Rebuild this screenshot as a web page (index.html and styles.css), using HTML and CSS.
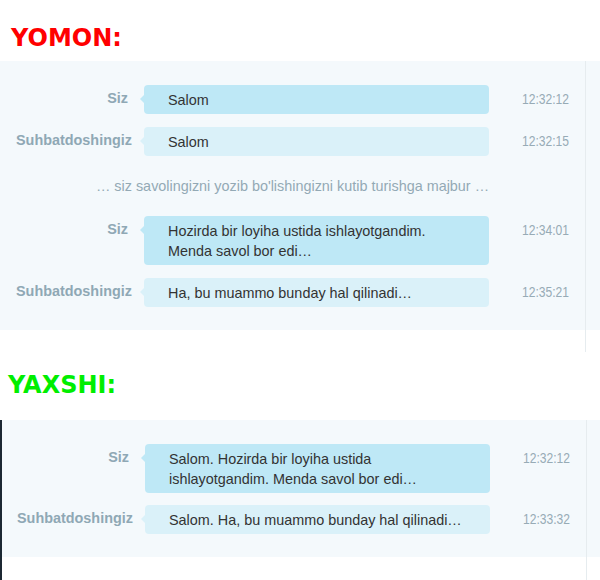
FILE: index.html
```html
<!DOCTYPE html>
<html lang="uz">
<head>
<meta charset="utf-8">
<title>Chat</title>
<link rel="stylesheet" href="styles.css">
</head>
<body>
<h1 class="label label--bad">YOMON:</h1>
<section class="thread">
  <div class="chat">
    <div class="msg msg--me">
      <div class="who">Siz</div>
      <div class="bubble">Salom</div>
      <div class="time"><span>12:32:12</span></div>
    </div>
    <div class="msg msg--them">
      <div class="who">Suhbatdoshingiz</div>
      <div class="bubble">Salom</div>
      <div class="time"><span>12:32:15</span></div>
    </div>
    <div class="note">… siz savolingizni yozib bo'lishingizni kutib turishga majbur …</div>
    <div class="msg msg--me">
      <div class="who">Siz</div>
      <div class="bubble">Hozirda bir loyiha ustida ishlayotgandim.<br>Menda savol bor edi…</div>
      <div class="time"><span>12:34:01</span></div>
    </div>
    <div class="msg msg--them">
      <div class="who">Suhbatdoshingiz</div>
      <div class="bubble">Ha, bu muammo bunday hal qilinadi…</div>
      <div class="time"><span>12:35:21</span></div>
    </div>
  </div>
  <div class="rail"></div>
  <div class="fill"></div>
</section>

<h2 class="label label--good">YAXSHI:</h2>
<section class="thread thread--good">
  <div class="chat">
    <div class="msg msg--me">
      <div class="who">Siz</div>
      <div class="bubble">Salom. Hozirda bir loyiha ustida<br>ishlayotgandim. Menda savol bor edi…</div>
      <div class="time"><span>12:32:12</span></div>
    </div>
    <div class="msg msg--them">
      <div class="who">Suhbatdoshingiz</div>
      <div class="bubble">Salom. Ha, bu muammo bunday hal qilinadi…</div>
      <div class="time"><span>12:33:32</span></div>
    </div>
  </div>
  <div class="rail"></div>
  <div class="fill"></div>
</section>
</body>
</html>
```
FILE: styles.css
```css
* { box-sizing: border-box; }
html, body { margin: 0; padding: 0; background: #fff; }
body {
  font-family: "Liberation Sans", Arial, sans-serif;
  font-size: 14.4px;
  color: #333;
  overflow: hidden;
}

.label {
  font-family: "DejaVu Sans", sans-serif;
  font-weight: bold;
  font-size: 24px;
  line-height: 28px;
  margin: 0;
}
.label--bad { color: #ff0000; margin: 24px 0 9px 11px; }
.label--good { color: #00ee00; margin: 19px 0 21px 8px; }

.thread {
  display: grid;
  grid-template-columns: 585px 1px 1fr;
  grid-template-rows: auto 22px;
}
.thread--good {
  border-left: 2px solid #1c2833;
  grid-template-columns: 584px 1px 1fr;
  grid-template-rows: auto 30px;
}

.chat {
  grid-column: 1;
  grid-row: 1;
  background: #f4f9fc;
  padding: 24px 0 23px;
  display: flex;
  flex-direction: column;
  gap: 13px;
}
.thread--good .chat { padding-top: 24px; gap: 12px; }

.rail {
  grid-column: 2;
  grid-row: 1 / 3;
  background: #e6ecef;
}
.fill {
  grid-column: 3;
  grid-row: 1;
  background: #f4f9fc;
}

.msg {
  display: grid;
  grid-template-columns: 112px 345px 1fr;
  column-gap: 16px;
  align-items: start;
  padding-left: 16px;
}
.thread--good .msg { padding-left: 15px; }

.who {
  text-align: right;
  white-space: nowrap;
  font-weight: bold;
  color: #8fa8b5;
  line-height: 20px;
  padding-top: 3px;
}

.bubble {
  position: relative;
  border-radius: 4px;
  padding: 4.5px 24px;
  line-height: 20px;
  color: #333;
}
.bubble::before {
  content: "";
  position: absolute;
  left: -4px;
  top: 9.5px;
  border-top: 4px solid transparent;
  border-bottom: 4px solid transparent;
  border-right: 4px solid transparent;
}
.msg--me .bubble { background: #bee8f6; }
.msg--them .bubble { background: #daf1f9; }
.msg--me .bubble::before { border-right-color: #bee8f6; }
.msg--them .bubble::before { border-right-color: #daf1f9; }

.time {
  color: #97abb6;
  line-height: 20px;
  padding-top: 4px;
  padding-left: 17px;
}
.time span {
  display: inline-block;
  transform: scaleX(0.84);
  transform-origin: left center;
}

.note {
  text-align: center;
  color: #93a9b5;
  line-height: 20px;
  margin: 7px 0;
}
```
